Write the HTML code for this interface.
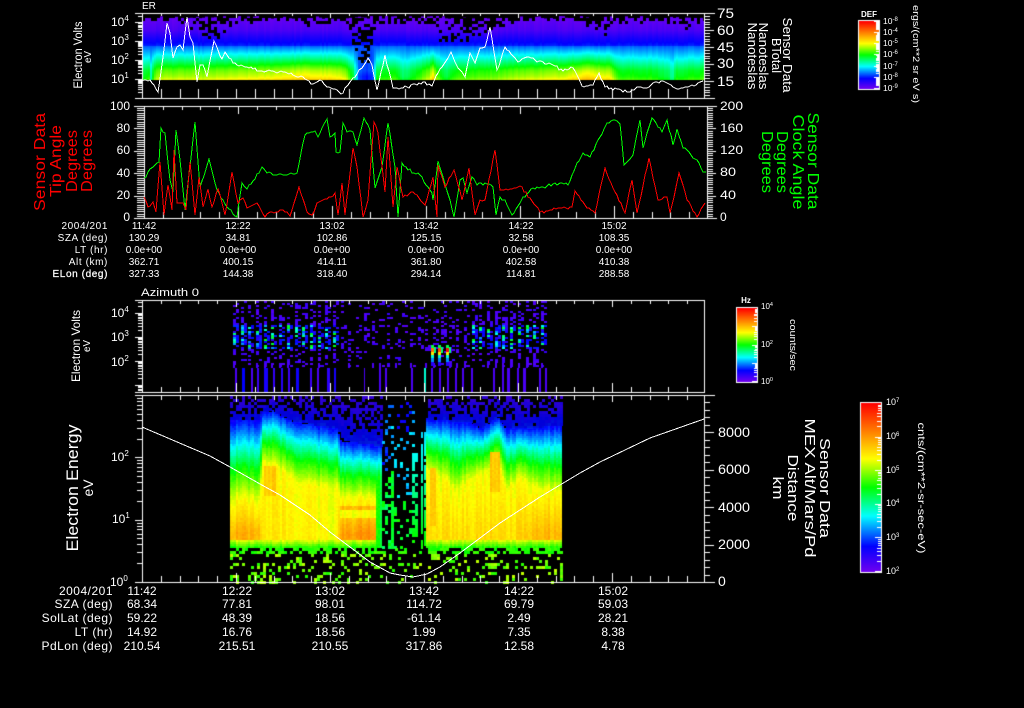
<!DOCTYPE html>
<html><head><meta charset="utf-8"><style>
html,body{margin:0;padding:0;background:#000;width:1024px;height:708px;overflow:hidden}
canvas,svg{position:absolute;left:0;top:0}
text{fill:#fff;font-family:"Liberation Sans",sans-serif}
.m{text-anchor:middle}.e{text-anchor:end}
.t2 text{font-size:10px}.t2 .e{letter-spacing:.6px}
.t4 text{font-size:12px}.t4 .e{letter-spacing:.5px}
.r text{fill:#f00}.g text{fill:#0f0}
polyline{fill:none;stroke-width:1;shape-rendering:crispEdges}
</style></head><body>
<canvas id="c" width="1024" height="708"></canvas>
<svg width="1024" height="708" viewBox="0 0 1024 708">
<polyline class="j" stroke="#fff" points="142,81 150,80 158,92 163,57 167,23 170,33 173,58 177,47 180,45 183,50 187,17 190,37 193,43 197,82 200,65 203,65 207,77 214,41 222,59 225,52 233,63 247,67 260,71 267,71 287,73 297,77 303,77 313,84 320,80 327,87 337,90 341,94 348,85 353,78 362,68 368,58 372,65 377,90 385,55 393,88 407,87 423,82 432,86 438,73 451,52 458,68 465,77 470,53 475,63 480,48 485,47 490,27 497,70 505,47 518,62 527,57 543,62 553,65 563,71 573,68 582,86 593,85 599,73 605,87 617,89 630,92 637,87 647,88 653,83 665,82 677,89 688,87 703,81"/>
<polyline class="j" stroke="#0f0" points="144,178 153,167 159,162 161,128 165,133 170,180 173,192 176,130 180,160 185,210 195,122 200,187 209,159 217,190 227,207 237,217 242,183 247,189 262,167 267,173 277,175 297,173 305,135 315,131 318,137 327,119 330,137 335,133 336,152 340,152 343,123 347,132 353,132 357,145 364,118 370,130 375,188 382,167 388,123 395,167 398,217 402,163 408,170 420,175 432,193 433,200 438,161 443,177 450,200 454,217 460,180 463,178 467,193 472,177 477,185 485,183 493,187 496,215 500,197 505,200 512,215 523,197 533,188 543,187 560,183 568,185 577,163 583,153 590,157 600,137 607,123 613,120 620,124 624,165 633,155 640,120 643,148 652,118 662,132 667,120 673,145 677,129 683,148 697,160 703,172 706,172"/>
<polyline class="j" stroke="#f00" points="144,197 148,207 153,202 156,212 160,162 164,215 168,185 172,210 174,150 177,203 183,203 186,210 190,162 195,215 199,177 203,207 208,189 212,207 218,189 225,215 232,172 238,203 243,198 247,208 257,203 265,217 270,212 283,210 290,216 299,187 307,212 312,215 317,203 323,200 335,193 338,215 342,183 345,215 353,148 357,167 363,217 368,200 374,122 378,133 385,192 388,137 393,207 397,167 403,197 413,192 425,205 433,177 437,217 438,165 445,187 454,170 462,200 469,168 475,215 480,200 485,200 495,150 500,190 508,190 520,186 540,212 558,208 572,207 575,191 587,208 595,213 605,168 615,192 625,213 632,180 637,213 649,158 658,200 667,197 670,213 679,173 687,200 697,217 705,203"/>
<polyline stroke="#fff" points="142,427 210,456 230,467 260,484 280,495 310,515 330,532 350,547 370,562 390,573 400,575 413,577 427,574 440,567 460,553 480,538 500,523 520,510 540,497 560,485 580,473 600,462 650,438 704,419"/>

<text x="142" y="9" font-size="10">ER</text>
<g transform="translate(82,55) rotate(-90)"><text class="m" font-size="11.5" textLength="67" lengthAdjust="spacingAndGlyphs">Electron Volts</text></g>
<g transform="translate(91,57) rotate(-90)"><text class="m" font-size="10" textLength="12" lengthAdjust="spacingAndGlyphs">eV</text></g>
<g font-size="12">
<text x="111" y="26">10<tspan dy="-5" font-size="8">4</tspan></text>
<text x="111" y="45">10<tspan dy="-5" font-size="8">3</tspan></text>
<text x="111" y="64">10<tspan dy="-5" font-size="8">2</tspan></text>
<text x="111" y="83">10<tspan dy="-5" font-size="8">1</tspan></text>
</g>
<g font-size="14">
<text x="717" y="18" textLength="17" lengthAdjust="spacingAndGlyphs">75</text>
<text x="717" y="35" textLength="17" lengthAdjust="spacingAndGlyphs">60</text>
<text x="717" y="52" textLength="17" lengthAdjust="spacingAndGlyphs">45</text>
<text x="717" y="68" textLength="17" lengthAdjust="spacingAndGlyphs">30</text>
<text x="717" y="86" textLength="17" lengthAdjust="spacingAndGlyphs">15</text>
</g>
<g font-size="12.5">
<g transform="translate(783,55) rotate(90)"><text class="m" textLength="75" lengthAdjust="spacingAndGlyphs">Sensor Data</text></g>
<g transform="translate(772,55.5) rotate(90)"><text class="m" textLength="35" lengthAdjust="spacingAndGlyphs">BTotal</text></g>
<g transform="translate(759,56) rotate(90)"><text class="m" textLength="67" lengthAdjust="spacingAndGlyphs">Nanoteslas</text></g>
<g transform="translate(748,56) rotate(90)"><text class="m" textLength="67" lengthAdjust="spacingAndGlyphs">Nanoteslas</text></g>
</g>
<text x="869" y="17" class="m" font-size="8" font-weight="bold">DEF</text>
<g font-size="8.5">
<text x="883" y="24">10<tspan dy="-3" font-size="6">-8</tspan></text>
<text x="883" y="35">10<tspan dy="-3" font-size="6">-4</tspan></text>
<text x="883" y="46">10<tspan dy="-3" font-size="6">-5</tspan></text>
<text x="883" y="57">10<tspan dy="-3" font-size="6">-6</tspan></text>
<text x="883" y="69">10<tspan dy="-3" font-size="6">-7</tspan></text>
<text x="883" y="80">10<tspan dy="-3" font-size="6">-8</tspan></text>
<text x="883" y="91">10<tspan dy="-3" font-size="6">-9</tspan></text>
</g>
<g transform="translate(913,54) rotate(90)"><text class="m" font-size="9" textLength="98" lengthAdjust="spacingAndGlyphs">ergs/(cm**2 sr eV s)</text></g>

<g font-size="12">
<text x="130" y="110" class="e" textLength="20" lengthAdjust="spacingAndGlyphs">100</text>
<text x="130" y="132" class="e">80</text><text x="130" y="154" class="e">60</text>
<text x="130" y="177" class="e">40</text><text x="130" y="199" class="e">20</text>
<text x="130" y="221" class="e">0</text>
<text x="720" y="110" textLength="23" lengthAdjust="spacingAndGlyphs">200</text>
<text x="720" y="132" textLength="23" lengthAdjust="spacingAndGlyphs">160</text>
<text x="720" y="154" textLength="23" lengthAdjust="spacingAndGlyphs">120</text>
<text x="720" y="176" textLength="16" lengthAdjust="spacingAndGlyphs">80</text>
<text x="720" y="199" textLength="16" lengthAdjust="spacingAndGlyphs">40</text>
<text x="720" y="221">0</text>
</g>
<g class="r" font-size="16">
<g transform="translate(45,162) rotate(-90)"><text class="m" textLength="98" lengthAdjust="spacingAndGlyphs">Sensor Data</text></g>
<g transform="translate(61,161) rotate(-90)"><text class="m" textLength="72" lengthAdjust="spacingAndGlyphs">Tip Angle</text></g>
<g transform="translate(77,161) rotate(-90)"><text class="m" textLength="62" lengthAdjust="spacingAndGlyphs">Degrees</text></g>
<g transform="translate(92,161) rotate(-90)"><text class="m" textLength="62" lengthAdjust="spacingAndGlyphs">Degrees</text></g>
</g>
<g class="g" font-size="16">
<g transform="translate(808,161) rotate(90)"><text class="m" textLength="97" lengthAdjust="spacingAndGlyphs">Sensor Data</text></g>
<g transform="translate(793,162) rotate(90)"><text class="m" textLength="95" lengthAdjust="spacingAndGlyphs">Clock Angle</text></g>
<g transform="translate(777,162) rotate(90)"><text class="m" textLength="62" lengthAdjust="spacingAndGlyphs">Degrees</text></g>
<g transform="translate(762,162) rotate(90)"><text class="m" textLength="62" lengthAdjust="spacingAndGlyphs">Degrees</text></g>
</g>
<g class="t2">
<text x="108" y="229" class="e">2004/201</text><text x="108" y="241" class="e">SZA (deg)</text><text x="108" y="253" class="e">LT (hr)</text><text x="108" y="265" class="e">Alt (km)</text><text x="108" y="277" class="e" stroke="#fff" stroke-width=".25">ELon (deg)</text>
<g class="m">
<text x="144" y="229" class="m">11:42</text><text x="144" y="241" class="m">130.29</text><text x="144" y="253" class="m">0.0e+00</text><text x="144" y="265" class="m">362.71</text><text x="144" y="277" class="m">327.33</text>
<text x="238" y="229" class="m">12:22</text><text x="238" y="241" class="m">34.81</text><text x="238" y="253" class="m">0.0e+00</text><text x="238" y="265" class="m">400.15</text><text x="238" y="277" class="m">144.38</text>
<text x="332" y="229" class="m">13:02</text><text x="332" y="241" class="m">102.86</text><text x="332" y="253" class="m">0.0e+00</text><text x="332" y="265" class="m">414.11</text><text x="332" y="277" class="m">318.40</text>
<text x="426" y="229" class="m">13:42</text><text x="426" y="241" class="m">125.15</text><text x="426" y="253" class="m">0.0e+00</text><text x="426" y="265" class="m">361.80</text><text x="426" y="277" class="m">294.14</text>
<text x="521" y="229" class="m">14:22</text><text x="521" y="241" class="m">32.58</text><text x="521" y="253" class="m">0.0e+00</text><text x="521" y="265" class="m">402.58</text><text x="521" y="277" class="m">114.81</text>
<text x="614" y="229" class="m">15:02</text><text x="614" y="241" class="m">108.35</text><text x="614" y="253" class="m">0.0e+00</text><text x="614" y="265" class="m">410.38</text><text x="614" y="277" class="m">288.58</text>
</g></g>

<text x="141" y="296" font-size="11" textLength="58" lengthAdjust="spacingAndGlyphs">Azimuth 0</text>
<g transform="translate(80,346) rotate(-90)"><text class="m" font-size="12" textLength="72" lengthAdjust="spacingAndGlyphs">Electron Volts</text></g>
<g transform="translate(90,346) rotate(-90)"><text class="m" font-size="10" textLength="12" lengthAdjust="spacingAndGlyphs">eV</text></g>
<g font-size="12">
<text x="111" y="317">10<tspan dy="-5" font-size="8">4</tspan></text>
<text x="111" y="341">10<tspan dy="-5" font-size="8">3</tspan></text>
<text x="111" y="366">10<tspan dy="-5" font-size="8">2</tspan></text>
</g>
<text x="746" y="303" class="m" font-size="8" font-weight="bold">Hz</text>
<g font-size="8">
<text x="761" y="309">10<tspan dy="-3" font-size="5.5">4</tspan></text>
<text x="761" y="347">10<tspan dy="-3" font-size="5.5">2</tspan></text>
<text x="761" y="384">10<tspan dy="-3" font-size="5.5">0</tspan></text>
</g>
<g transform="translate(790,345) rotate(90)"><text class="m" font-size="9" textLength="52" lengthAdjust="spacingAndGlyphs">counts/sec</text></g>

<g transform="translate(78,488) rotate(-90)"><text class="m" font-size="17" textLength="127" lengthAdjust="spacingAndGlyphs">Electron Energy</text></g>
<g transform="translate(93,488) rotate(-90)"><text class="m" font-size="14" textLength="17" lengthAdjust="spacingAndGlyphs">eV</text></g>
<g font-size="12">
<text x="111" y="461">10<tspan dy="-5" font-size="8">2</tspan></text>
<text x="112" y="523">10<tspan dy="-5" font-size="8">1</tspan></text>
<text x="110" y="586">10<tspan dy="-5" font-size="8">0</tspan></text>
</g>
<g font-size="14">
<text x="718" y="437" textLength="32" lengthAdjust="spacingAndGlyphs">8000</text>
<text x="718" y="474" textLength="32" lengthAdjust="spacingAndGlyphs">6000</text>
<text x="718" y="512" textLength="32" lengthAdjust="spacingAndGlyphs">4000</text>
<text x="718" y="549" textLength="32" lengthAdjust="spacingAndGlyphs">2000</text>
<text x="718" y="586">0</text>
</g>
<g font-size="15">
<g transform="translate(820,488) rotate(90)"><text class="m" textLength="100" lengthAdjust="spacingAndGlyphs">Sensor Data</text></g>
<g transform="translate(805,488) rotate(90)"><text class="m" textLength="139" lengthAdjust="spacingAndGlyphs">MEX Alt/Mars/Pd</text></g>
<g transform="translate(788,488) rotate(90)"><text class="m" textLength="67" lengthAdjust="spacingAndGlyphs">Distance</text></g>
<g transform="translate(773,488) rotate(90)"><text class="m" textLength="23" lengthAdjust="spacingAndGlyphs">km</text></g>
</g>
<g font-size="9">
<text x="886" y="405">10<tspan dy="-3" font-size="6">7</tspan></text>
<text x="886" y="439">10<tspan dy="-3" font-size="6">6</tspan></text>
<text x="886" y="473">10<tspan dy="-3" font-size="6">5</tspan></text>
<text x="886" y="506">10<tspan dy="-3" font-size="6">4</tspan></text>
<text x="886" y="540">10<tspan dy="-3" font-size="6">3</tspan></text>
<text x="886" y="574">10<tspan dy="-3" font-size="6">2</tspan></text>
</g>
<g transform="translate(918,488) rotate(90)"><text class="m" font-size="10" textLength="131" lengthAdjust="spacingAndGlyphs">cnts/(cm**2-sr-sec-eV)</text></g>
<g class="t4">
<text x="113" y="595" class="e">2004/201</text><text x="113" y="608" class="e">SZA (deg)</text><text x="113" y="622" class="e">SolLat (deg)</text><text x="113" y="636" class="e">LT (hr)</text><text x="113" y="650" class="e">PdLon (deg)</text>
<text x="142" y="595" class="m">11:42</text><text x="142" y="608" class="m">68.34</text><text x="142" y="622" class="m">59.22</text><text x="142" y="636" class="m">14.92</text><text x="142" y="650" class="m">210.54</text>
<text x="237" y="595" class="m">12:22</text><text x="237" y="608" class="m">77.81</text><text x="237" y="622" class="m">48.39</text><text x="237" y="636" class="m">16.76</text><text x="237" y="650" class="m">215.51</text>
<text x="330" y="595" class="m">13:02</text><text x="330" y="608" class="m">98.01</text><text x="330" y="622" class="m">18.56</text><text x="330" y="636" class="m">18.56</text><text x="330" y="650" class="m">210.55</text>
<text x="424" y="595" class="m">13:42</text><text x="424" y="608" class="m">114.72</text><text x="424" y="622" class="m">-61.14</text><text x="424" y="636" class="m">1.99</text><text x="424" y="650" class="m">317.86</text>
<text x="519" y="595" class="m">14:22</text><text x="519" y="608" class="m">69.79</text><text x="519" y="622" class="m">2.49</text><text x="519" y="636" class="m">7.35</text><text x="519" y="650" class="m">12.58</text>
<text x="613" y="595" class="m">15:02</text><text x="613" y="608" class="m">59.03</text><text x="613" y="622" class="m">28.21</text><text x="613" y="636" class="m">8.38</text><text x="613" y="650" class="m">4.78</text>
</g>
</svg>
<script>
(function(){
var c=document.getElementById('c').getContext('2d');
c.fillStyle='#000';c.fillRect(0,0,1024,708);
var s=12345;function R(){s=(s*1103515245+12345)&0x7fffffff;return s/0x7fffffff;}
for(var q0=0;q0<20;q0++)R();
[].forEach.call(document.querySelectorAll('polyline.j'),function(pl){
 var pts=pl.getAttribute('points').trim().split(/\s+/).map(function(p){return p.split(',').map(Number)}),out=[];
 for(var i=0;i<pts.length-1;i++){var a=pts[i],b=pts[i+1],dx=b[0]-a[0];out.push(a.join(','));
  for(var k=2;k<dx-1;k+=2){var t=k/dx;out.push((a[0]+k)+','+Math.round(a[1]+(b[1]-a[1])*t+(R()-.5)*3));}}
 out.push(pts[pts.length-1].join(','));pl.setAttribute('points',out.join(' '));
});
var st=[[0,110,0,240],[.15,0,0,255],[.33,0,255,255],[.5,0,255,0],[.67,255,255,0],[.83,255,130,0],[1,255,0,0]];
function cm(v){v=Math.max(0,Math.min(1,v));for(var i=1;i<st.length;i++){if(v<=st[i][0]){var a=st[i-1],b=st[i],t=(v-a[0])/(b[0]-a[0]);return 'rgb('+[1,2,3].map(function(k){return Math.round(a[k]+(b[k]-a[k])*t)}).join(',')+')';}}return 'rgb(255,0,0)';}
function L(p,x){if(x<=p[0][0])return p[0][1];for(var i=1;i<p.length;i++){if(x<=p[i][0]){var t=(x-p[i-1][0])/(p[i][0]-p[i-1][0]);return p[i-1][1]+(p[i][1]-p[i-1][1])*t;}}return p[p.length-1][1];}
function P(x,y,w,h,v){c.fillStyle=cm(v);c.fillRect(x,y,w,h);}
function W(x,y,w,h){c.fillStyle='#fff';c.fillRect(x,y,w,h);}

/* Panel 1 */
var I1=[[142,-.1],[148,-.05],[150,-.2],[153,0],[158,.05],[165,.05],[200,.05],[240,.08],[270,.1],[300,.14],[330,.12],[345,.08],[352,-.1],[358,-.4],[366,-.45],[372,-.4],[376,-.08],[395,-.05],[402,-.15],[420,-.02],[428,.05],[432,.15],[436,0],[445,-.12],[455,-.03],[470,-.02],[490,0],[520,.05],[560,.08],[585,.16],[610,.1],[618,-.05],[650,-.06],[668,-.12],[671,-.2],[675,-.08],[703,-.05]];
var B1=[[16,.01],[30,.05],[38,.12],[45,.17],[46,.22],[52,.29],[58,.36],[64,.44],[70,.52],[76,.56],[79,.6]];
var D1=[[142,5],[180,5],[186,14],[195,8],[205,26],[222,22],[232,6],[290,4],[300,9],[345,4],[352,30],[358,46],[368,44],[374,6],[425,8],[432,20],[445,26],[470,24],[490,12],[515,4],[570,3],[596,14],[604,26],[610,6],[680,5],[690,18],[703,8]];
var x,y,v;
for(x=142;x<704;x+=2){var n=(R()-.5)*.02;for(y=16;y<80;y++){var t=L(B1,y);if(y>45)t+=L(I1,x)*(y-45)/34;P(x,y,2,1,t+n);}}
for(x=142;x<704;x+=3){var d=L(D1,x),o=1+R()*3;c.fillStyle='#000';c.fillRect(x,15,3,o);
 for(y=15;y<16+d;y+=3){if(R()<.3+.3*(1-(y-16)/d))c.fillRect(x,y,3,3);}}
/* Panel 3 */
var bars=[[235,2,.05],[242,3,.15],[251,2,.05],[257,2,.07],[264,4,.12],[273,2,.08],[281,2,.1],[288,2,.07],[296,3,.13],[310,2,.07],[317,2,.05],[327,3,.09],[334,2,.12],[364,1,.05],[379,2,.05],[385,2,.05],[411,2,.05],[424,2,.36],[431,2,.06],[439,2,.05],[447,2,.05],[455,2,.05],[462,2,.05],[471,2,.05],[493,2,.05],[502,2,.05],[507,3,.05],[517,2,.05],[523,3,.05],[539,2,.05],[545,2,.05]];
bars.forEach(function(b){P(b[0],368,b[1],24,b[2]);});
for(var cx=233;cx<547;cx+=7.7){
 var dn=(cx<340||cx>470)?.5:(cx>430?.3:.2),band=(cx<335||cx>468);
 for(var j=0;j<2;j++){var xx=Math.round(cx)+j*3;
  for(y=301;y<366;y+=2){
   var pr=dn*(j?.55:1);if(y>=325&&y<348)pr=dn*(j?1:1.5);else if(y<325)pr*=.8;if(y>350)pr*=.75;
   if(R()<pr){v=.03+R()*.05;
    if(band&&y>=325&&y<348){v=.08+R()*.1;if(j==0&&R()<.6)v=.22+R()*.28;}
    P(xx,y,3,2,v);}
  }
 }
 if(R()<.6)P(Math.round(cx),363,2,5,.05);
}
[[431,.85],[438,.9],[446,.98]].forEach(function(h){
 P(h[0],345,3,3,.45);P(h[0],348,3,4,h[1]);P(h[0],352,3,3,.7);P(h[0],355,3,3,.36);
 P(h[0]+3,347,2,6,.42);P(h[0],358,3,4,.25);P(h[0],362,3,4,.1);
});
/* Panel 4 */
var T4=[[230,420],[258,420],[262,412],[272,410],[290,420],[336,428],[340,440],[380,445],[392,460],[426,418],[470,422],[480,428],[497,416],[505,428],[561,425]];
var Y4=[[230,500],[258,500],[262,462],[272,465],[300,485],[336,488],[340,497],[378,497],[392,540],[426,468],[445,480],[455,492],[470,478],[485,472],[497,458],[505,490],[520,478],[540,490],[561,492]];
var X4=[[230,.1],[258,.1],[262,.03],[275,.02],[336,.0],[340,.12],[378,.15],[385,.05],[426,.06],[435,.04],[490,.05],[510,.03],[535,.09],[561,.09]];
function vv(x,y){var a=L(T4,x),b=L(Y4,x),e=L(X4,x),t=(y-a)/(b-a),r;
 if(y>=548)return -1;
 if(t<0)return -2;
 if(t<.3)r=.15+.18*t/.3;else if(t<.6)r=.33+.17*(t-.3)/.3;else if(t<1)r=.5+.17*(t-.6)/.4;
 else r=.67+e*Math.min(1,(y-b)/Math.max(8,532-b));
 if(x>338&&x<378){if(y>=505&&y<=509)r=.76;else if(y>509&&y<518)r=.67;}
 if(x>263&&x<275&&y>=465&&y<=495)r=.73;
 if(x>428&&x<436&&y>=468&&y<=525)r=.75;
 if(x>488&&x<499&&y>=452&&y<=490)r=.74;
 if(y>538)r=Math.min(r,.67-(y-538)*.018);
 return r;}
for(x=230;x<561;x+=2){
 var col=(R()-.5)*.05;
 if(x>=382&&x<426)continue;
 for(y=396;y<548;y+=2){
  v=vv(x,y);
  if(v==-2)continue;
  if(x>374&&x<382){v=Math.min(v,.58-(x-374)*.02);}
  P(x,y,2,2,v+col+(R()-.5)*.025);
 }
}
/* top scatter */
c.globalAlpha=.85;
for(x=230;x<561;x+=3){for(y=396;y<480;y+=3){
 if(x>=382&&x<426){continue;}
 var a=L(T4,x);if(y>=a)continue;
 var fr=(y-396)/Math.max(8,a-396),q=.3+.7*fr;
 if(R()<q)P(x,y,3,3,.06+.09*fr+R()*.03);
}}
c.globalAlpha=1;
/* gap region */
for(x=382;x<426;x+=3){for(y=402;y<548;y+=3){
 var pp=0,vc=.25+R()*.1;
 if(x<390){pp=y>470?.3:.2;vc=y>470?.42+R()*.1:.15+R()*.15;}
 else if(x<394){pp=y>470?.85:.25;vc=y>470?.45+R()*.06:.2+R()*.12;}
 else if(x<411){pp=y<430?.2:(y<500?.2:.22);vc=y<430?.12+R()*.05:(y<500?.25+R()*.1:.44+R()*.08);}
 else if(x<417){pp=y>450&&y<535?.7:.08;vc=.33+(y-450)/85*.17;}
 else if(x>=420){pp=y>430?.85:0;vc=.3+(y-430)/120*.22;}
 if(R()<pp)P(x,y,x>=420?2:3,3,vc);
}}
/* low speckle */
for(x=230;x<561;x+=3){for(y=548;y<582;y+=3){
 var gp=(x>384&&x<426)?.1:(y<553?.6:.22);
 if(R()<gp)P(x,y,3,3,y<553?.5+R()*.05:.52+R()*.11);
}}
/* Axes */
function xt(x0,top,bot,mh,Mh,Th,Tm,end){for(var k=0;x0+18.8*k<end;k++){var xx=Math.round(x0+18.8*k),M=k%5==0;W(xx,top,1,M?Tm:Th);W(xx,bot-(M?Mh:mh),1,M?Mh:mh);}}
function lg(x,xmaj,xmin,base,dec,top,bot){for(var d=-1;d<6;d++){for(var k=1;k<10;k++){var yy=Math.round(base-dec*(d+Math.log10(k)));if(yy<top||yy>bot)continue;if(k==1)W(xmaj,yy,x-xmaj,1);else W(xmin,yy,x-xmin,1);}}}
function lin(x,xe,xM,y0,st2,n,every,top){for(var k=0;k<=n;k++){var yy=Math.round(y0-st2*k);if(yy<top)break;if(k%every==0)W(x,yy,xM-x,1);else W(x,yy,xe-x,1);}}
/* p1 */
W(135,13,580,1);W(135,98,580,1);W(142,13,1,86);W(704,13,1,86);
xt(142,13,98,9,9,3,5,704);
lg(142,135,138,98,19.1,13,98);
lin(704,710,714,98,85/30,30,6,13);
/* p2 */
W(134,106,583,1);W(134,218,583,1);W(144,106,1,113);W(707,106,1,113);
xt(144,106,218,6,12,4,8,707);
lin(137,144,144,218,2.24,50,10,106);
for(var k=0;k<=5;k++)W(134,Math.round(218-22.4*k),10,1);
lin(707,713,716,218,2.24,50,10,106);
/* p3 */
W(135,300,570,1);W(135,392,570,1);W(142,300,1,93);W(704,300,1,93);
xt(142,300,392,5,9,4,7,704);
lg(142,135,138,409,24,300,392);
/* p4 */
W(135,395,580,1);W(135,582,580,1);W(142,395,1,188);W(704,395,1,188);
xt(142,395,582,6,9,5,7,704);
lg(142,135,137,582,62.3,395,582);
lin(704,710,714,582,7.5,24,5,395);
/* Colorbars */
function bar(x0,x1,y0,y1,ticks){for(var yy=y0;yy<=y1;yy++)P(x0,yy,x1-x0+1,1,1-(yy-y0)/(y1-y0));
 W(x0-1,y0-1,x1-x0+3,1);W(x0-1,y1+1,x1-x0+3,1);W(x0-1,y0-1,1,y1-y0+3);W(x1+1,y0-1,1,y1-y0+3);
 ticks.forEach(function(t){W(x1-t[1]+1,t[0],t[1],1);});}
function logTicks(y0,y1,dec,ndec,len){var r=[];for(var d=0;d<ndec;d++){for(var k=1;k<10;k++){var yy=Math.round(y1-(d+Math.log10(k))*dec);if(yy>=y0&&yy<=y1)r.push([yy,k==1?len+2:(k>5?len-1:len)]);}}return r;}
bar(859,878,21,88,logTicks(21,88,11.2,7,3).concat([[22,3],[23,3],[24,3],[25,3],[26,3],[27,3],[28,3],[36,3],[37,3],[38,3],[39,3],[43,3],[44,3],[45,3],[46,3],[54,3],[55,3],[64,3],[65,3],[66,3],[67,3],[70,3],[71,3],[78,3],[79,3],[80,3],[81,3],[82,3],[83,3],[84,3],[85,3]]));
bar(737,756,308,381,logTicks(308,381,18.2,4,3));
bar(861,880,403,571,logTicks(403,571,33.6,5,4));
})();
</script>
</body></html>
